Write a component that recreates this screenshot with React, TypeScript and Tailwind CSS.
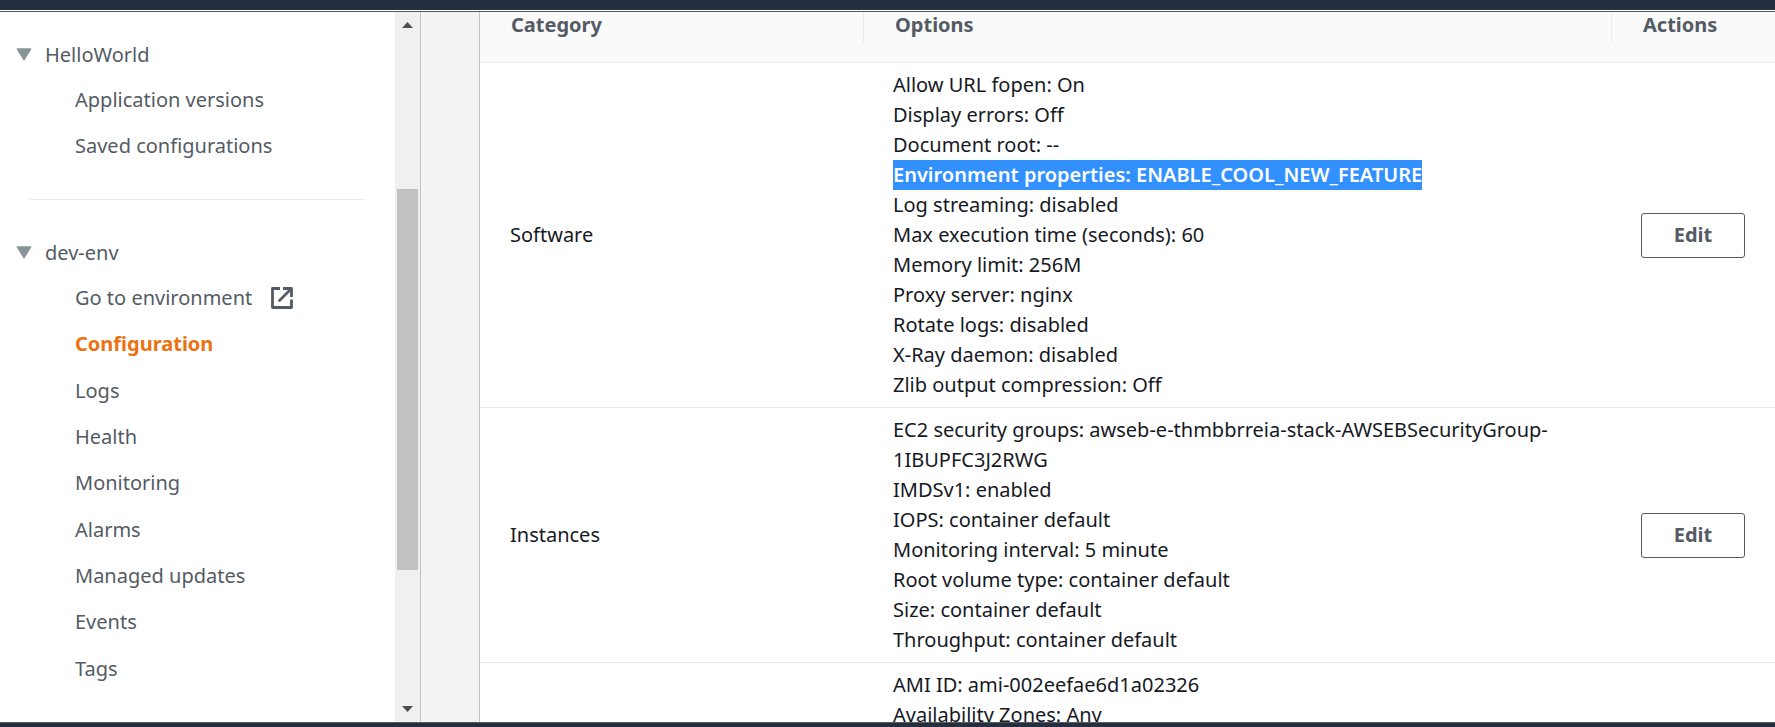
import React from "react";

type Row = { category?: string; options: string[]; selected?: number };

const rows: Row[] = [
  {
    category: "Software",
    selected: 3,
    options: [
      "Allow URL fopen: On",
      "Display errors: Off",
      "Document root: --",
      "Environment properties: ENABLE_COOL_NEW_FEATURE",
      "Log streaming: disabled",
      "Max execution time (seconds): 60",
      "Memory limit: 256M",
      "Proxy server: nginx",
      "Rotate logs: disabled",
      "X-Ray daemon: disabled",
      "Zlib output compression: Off",
    ],
  },
  {
    category: "Instances",
    options: [
      "EC2 security groups: awseb-e-thmbbrreia-stack-AWSEBSecurityGroup-1IBUPFC3J2RWG",
      "IMDSv1: enabled",
      "IOPS: container default",
      "Monitoring interval: 5 minute",
      "Root volume type: container default",
      "Size: container default",
      "Throughput: container default",
    ],
  },
  {
    options: ["AMI ID: ami-002eefae6d1a02326", "Availability Zones: Any"],
  },
];

const appLinks = ["Application versions", "Saved configurations"];
const envLinks = [
  "Go to environment",
  "Configuration",
  "Logs",
  "Health",
  "Monitoring",
  "Alarms",
  "Managed updates",
  "Events",
  "Tags",
];

function SectionToggle({ label }: { label: string }) {
  return (
    <button type="button" aria-expanded="true" className="flex h-[45px] items-center gap-[13px] pl-4">
      <svg width="16" height="13" viewBox="0 0 16 13" aria-hidden="true">
        <path d="M1.5 1h13L8 11.5z" fill="#879596" stroke="#879596" strokeWidth="1.6" strokeLinejoin="round" />
      </svg>
      <span>{label}</span>
    </button>
  );
}

function ExternalIcon() {
  return (
    <svg width="22" height="22" viewBox="0 0 22 22" fill="none" stroke="#545b64" strokeWidth="2.8" aria-hidden="true">
      <path d="M9 1.5H1.5v19h19V12.5" strokeLinejoin="round" />
      <path d="M12 1.5h8.5V10" strokeLinejoin="round" />
      <path d="M20 2L8.5 13.5" strokeLinecap="round" />
    </svg>
  );
}

function Scrollbar() {
  return (
    <div className="flex w-[25px] shrink-0 flex-col items-center bg-[#f0f0f0]">
      <button type="button" aria-label="Scroll up" className="flex h-[26px] w-full items-center justify-center">
        <svg width="11" height="6" viewBox="0 0 11 6" aria-hidden="true">
          <path d="M0 6L5.5 0L11 6z" fill="#505050" />
        </svg>
      </button>
      <div className="flex-[151]" />
      <div className="w-[21px] flex-[381] bg-[#c1c1c1]" />
      <div className="flex-[126]" />
      <button type="button" aria-label="Scroll down" className="flex h-[26px] w-full items-center justify-center">
        <svg width="11" height="6" viewBox="0 0 11 6" aria-hidden="true">
          <path d="M0 0L5.5 6L11 0z" fill="#505050" />
        </svg>
      </button>
    </div>
  );
}

function Sidebar() {
  return (
    <aside className="flex w-[421px] shrink-0 border-r border-[#bfc5c6] bg-white text-[#545b64]">
      <nav className="flex min-w-0 flex-1 flex-col pt-5 pb-[30px]">
        <SectionToggle label="HelloWorld" />
        <ul className="pl-[75px]">
          {appLinks.map((l) => (
            <li key={l} className="flex h-[46px] items-center">
              <a href="#">{l}</a>
            </li>
          ))}
        </ul>
        <hr className="mx-[30px] my-[30px] border-[#eaeded]" />
        <SectionToggle label="dev-env" />
        <ul className="flex flex-1 flex-col pl-[75px]">
          {envLinks.map((l) => (
            <li key={l} className="flex flex-1 items-center">
              {l === "Configuration" ? (
                <a href="#" aria-current="page" className="font-bold text-[#ec7211]">
                  {l}
                </a>
              ) : (
                <a href="#" className="flex items-center gap-[19px]">
                  {l}
                  {l === "Go to environment" && <ExternalIcon />}
                </a>
              )}
            </li>
          ))}
        </ul>
      </nav>
      <Scrollbar />
    </aside>
  );
}

function ConfigTable() {
  return (
    <table className="w-full table-fixed border-collapse text-left text-[#16191f]">
      <colgroup>
        <col className="w-[384px]" />
        <col />
        <col className="w-[163px]" />
      </colgroup>
      <thead className="bg-[#fafafa] text-[#545b64]">
        <tr className="border-b border-[#eaeded]">
          {["Category", "Options", "Actions"].map((h, i) => (
            <th key={h} scope="col" className="p-0 pb-[19px] font-bold">
              <div
                className={
                  i < 2
                    ? "h-[31px] border-r border-[#eaeded] pl-[31px] leading-[26px]"
                    : "h-[31px] pl-[31px] leading-[26px]"
                }
              >
                {h}
              </div>
            </th>
          ))}
        </tr>
      </thead>
      <tbody>
        {rows.map((r, n) => (
          <tr key={n} className="border-b border-[#eaeded]">
            <td className="py-[7px] pl-[30px]">{r.category}</td>
            <td className="py-[7px] pr-5 pl-[29px]">
              <ul>
                {r.options.map((o, i) => (
                  <li key={o}>
                    {i === r.selected ? (
                      <mark className="inline-block bg-[#3390ff] font-semibold text-white">{o}</mark>
                    ) : (
                      o
                    )}
                  </li>
                ))}
              </ul>
            </td>
            <td className="py-[7px] pl-[29px]">
              {r.category && (
                <button
                  type="button"
                  aria-label={`Edit ${r.category}`}
                  className="block h-[45px] w-[104px] rounded-[3px] border border-[#545b64] bg-white font-bold text-[#545b64]"
                >
                  Edit
                </button>
              )}
            </td>
          </tr>
        ))}
      </tbody>
    </table>
  );
}

export default function App() {
  return (
    <div className="flex h-screen flex-col overflow-hidden bg-white font-['Noto_Sans',sans-serif] text-[20px] leading-[30px]">
      <header className="h-[10px] shrink-0 bg-[#232f3e]" />
      <div className="mt-px flex min-h-0 flex-1 border-y border-[#545b64] bg-[#f2f3f3]">
        <Sidebar />
        <main className="ml-[58px] min-w-0 flex-1 overflow-hidden border-l border-[#bfc5c6] bg-white">
          <ConfigTable />
        </main>
      </div>
      <footer className="h-1 shrink-0 bg-[#232f3e]" />
    </div>
  );
}
